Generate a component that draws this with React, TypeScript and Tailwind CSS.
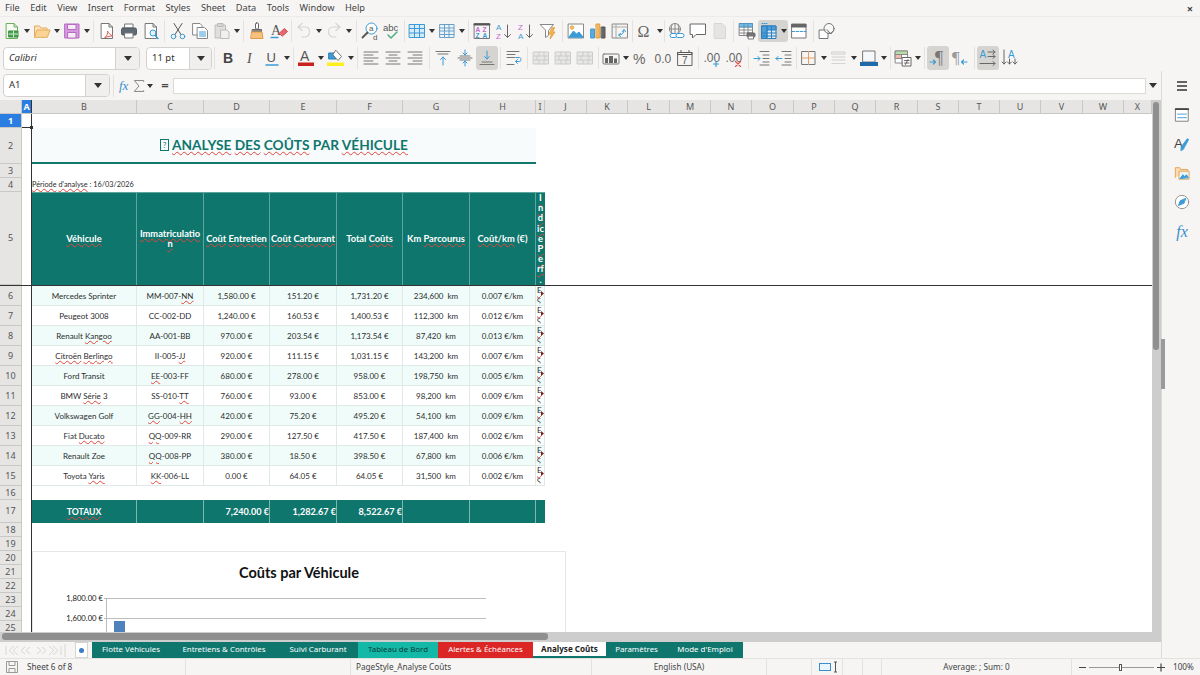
import React from "react";

const Svg = ({ children, s = 18 }: { children: React.ReactNode; s?: number }) => (
  <svg width={s} height={s} viewBox="0 0 18 18" fill="none" stroke="#5a5a5a" strokeWidth="1" strokeLinejoin="round" strokeLinecap="round">
    {children}
  </svg>
);
const B = "#3b9bd6";
const T = ({ x, y, c, s = 8, w = 400, f = "Liberation Sans", st = "normal", children }: any) => (
  <text x={x} y={y} fill={c} stroke="none" fontSize={s} fontWeight={w} fontFamily={f} fontStyle={st}>{children}</text>
);
const Doc = ({ c = "#777" }: { c?: string }) => <path d="M3.500 1.500h7.500l3.500 3.500v11.500h-11z M11 1.500v3.500h3.500" stroke={c} fill="#fff" />;
const GridIc = ({ fill = "#d6ebf8", stroke = B }: { fill?: string; stroke?: string }) => (
  <g stroke={stroke}>
    <rect x="1.500" y="2.500" width="15" height="13" fill={fill} />
    <path d="M1.500 6.500h15M1.500 11h15M6.500 2.500v13M11.500 2.500v13" />
  </g>
);
const Lines = ({ ys, x1s, x2s }: { ys: number[]; x1s: number[]; x2s: number[] }) => (
  <g stroke="#777">{ys.map((y, i) => <path key={i} d={`M${x1s[i]} ${y}H${x2s[i]}`} />)}</g>
);

const ic: Record<string, React.ReactNode> = {
  newDoc: <Svg><path d="M3.500 1.500h7.500l3.500 3.500v11.500h-11z M11 1.500v3.500h3.500" stroke="#6ab05c" fill="#f6fbf3" /><rect x="6" y="9" width="9" height="6" fill="#4aa350" stroke="#3a8a40" /><path d="M6 12h9M10.500 9v6" stroke="#cfe9cf" /></Svg>,
  open: <Svg><path d="M1.500 15V4h5l1.500 2h6v2" stroke="#e3ab5e" fill="#fbe2b8" /><path d="M1.500 15l2.500-7h13l-2.500 7z" stroke="#e3ab5e" fill="#fbd394" /></Svg>,
  save: <Svg><path d="M2 2h14v14H2z" fill="#d59ade" stroke="#b56cc0" /><rect x="5" y="2.500" width="8" height="5" fill="#f8eefa" stroke="#b56cc0" /><rect x="5" y="10.500" width="8" height="5.500" fill="#f8eefa" stroke="#b56cc0" /></Svg>,
  pdf: <Svg><Doc /><path d="M7 15.500c2.500-2 3-5 2.500-6.500 1 2 2.500 4 5.500 5-2.500 0-5 .5-8 1.500z" stroke="#dd6058" /></Svg>,
  print: <Svg><rect x="5" y="2" width="8" height="4" fill="#fff" stroke="#777" /><rect x="1.500" y="6" width="15" height="7" rx="1.500" fill="#5f6a74" stroke="#505a63" /><rect x="5" y="11" width="8" height="5" fill="#fff" stroke="#777" /></Svg>,
  preview: <Svg><Doc /><circle cx="11" cy="11" r="3" stroke={B} fill="#e4f2fb" /><path d="M13 13.500l3 3" stroke={B} strokeWidth="1.500" /></Svg>,
  cut: <Svg><path d="M5 1.500l7 11M13 1.500l-7 11" stroke="#555" /><circle cx="4.500" cy="14.500" r="2.300" stroke={B} /><circle cx="13.500" cy="14.500" r="2.300" stroke={B} /></Svg>,
  copy: <Svg><path d="M2 1.500h7l2 2v9.500h-9z" stroke="#888" fill="#fff" /><path d="M6.500 5.500h7l3 3v8h-10z" stroke="#888" fill="#fff" /><path d="M8.500 10h6M8.500 12h6M8.500 14h6" stroke={B} /></Svg>,
  paste: <Svg><rect x="2.500" y="3" width="10" height="13" fill="#e0dfdd" stroke="#bbb" /><rect x="5" y="1.500" width="5" height="3" fill="#d5d5d3" stroke="#bbb" /><path d="M8 8h6l2 2v6.500H8z" fill="#f0f0ee" stroke="#bbb" /></Svg>,
  clone: <Svg><rect x="7.500" y="1" width="3" height="6" rx="1" stroke="#666" fill="#fff" /><path d="M4.500 7.500h9v2.500h-9z" fill="#888" stroke="#666" /><path d="M4 10h10l1 6.500H3z" fill="#f8c27e" stroke="#e09a45" /></Svg>,
  clear: <Svg><T x="1" y="13" c="#555" s={14} f="Liberation Serif">A</T><path d="M1 15.500h7" stroke={B} strokeWidth="1.300" /><path d="M9.500 11l5-4.500 3 3-5 4.500z" fill="#e9666a" stroke="#d44d52" /></Svg>,
  undo: <Svg><path d="M3 5l4-3.500M3 5l4 3.500M3 5h7c6 0 6 9 0 10H7" stroke="#d6d5d3" strokeWidth="1.200" /></Svg>,
  redo: <Svg><path d="M15 5l-4-3.500M15 5l-4 3.500M15 5H8c-6 0-6 9 0 10h3" stroke="#d6d5d3" strokeWidth="1.200" /></Svg>,
  find: <Svg><circle cx="10.500" cy="6.500" r="5.500" stroke={B} fill="#fff" /><T x="8" y="9" c="#555" s={8}>a</T><path d="M6.500 10.500L1.500 15.500" stroke="#555" strokeWidth="1.800" /><T x="12" y="17.500" c="#555" s={8}>d</T></Svg>,
  spell: <Svg><T x="0" y="9" c="#555" s={9.500}>abc</T><path d="M5 13l3 3 6-6" stroke="#4caf7d" strokeWidth="1.500" /></Svg>,
  grid: <Svg><GridIc /></Svg>,
  grid2: <Svg><g stroke="#6a9fc6"><rect x="2" y="2.500" width="14" height="13" fill="#eef5fa" /><path d="M2 6h14M2 9h14M2 12.500h14M6.500 2.500v13M11 2.500v13" /></g></Svg>,
  sort: <Svg><rect x="1.500" y="1.500" width="15" height="15" stroke="#777" /><path d="M1.500 2.500h15" stroke="#555" strokeWidth="2" /><T x="2.500" y="9.500" c="#c46ad0" s={6.500} w={700}>A</T><T x="9.500" y="9.500" c="#c46ad0" s={6.500} w={700}>Z</T><T x="2.500" y="15.500" c={B} s={6.500} w={700}>Z</T><T x="9.500" y="15.500" c={B} s={6.500} w={700}>A</T></Svg>,
  asc: <Svg><T x="1" y="8" c={B} s={8}>A</T><T x="1" y="16.500" c="#c46ad0" s={8}>Z</T><path d="M12.500 3v12M9.500 12.500l3 3 3-3" stroke="#666" /></Svg>,
  desc: <Svg><T x="1" y="8" c="#c46ad0" s={8}>Z</T><T x="1" y="16.500" c={B} s={8}>A</T><path d="M12.500 3v12M9.500 12.500l3 3 3-3" stroke="#666" /></Svg>,
  filter: <Svg><path d="M1.500 2.500h13l-5 6v5l-3 2v-7z" stroke="#888" fill="#fff" /><path d="M13 6l-3 6h2.500l-1.500 5 5-7h-2.500l2-4z" fill="#f3b45a" stroke="#e8a040" /></Svg>,
  image: <Svg><rect x="1.500" y="2" width="15" height="14" stroke="#888" fill="#fff" /><path d="M2 15l4.500-6 3 3 2.500-2 4 5z" fill={B} stroke={B} /><circle cx="5" cy="5.500" r="1.700" fill="#f5c069" stroke="#e8a94a" /></Svg>,
  chart: <Svg><rect x="2" y="7" width="3.500" height="9" fill="#5aaade" stroke={B} /><rect x="7.300" y="2" width="3.500" height="14" fill="#f3b45a" stroke="#e3a040" /><rect x="12.500" y="5" width="3.500" height="11" fill="#666" stroke="#555" /></Svg>,
  pivot: <Svg><rect x="1.500" y="2" width="15" height="14" stroke="#888" fill="#f4f4f3" /><path d="M1.500 5h15M5 2v14" stroke="#aaa" /><path d="M8 13c3 0 5-2 5-5M11.500 9.500L13 7.500l1.500 2M9.500 11.500L7.500 13l2 1.500" stroke={B} /></Svg>,
  omega: <Svg><T x="1.500" y="15" c="#666" s={16} f="Liberation Serif">Ω</T></Svg>,
  link: <Svg><circle cx="8" cy="7" r="5.500" stroke="#888" /><path d="M2.500 7h11M8 1.500v11M5 2.500c-1 3-1 6 0 9M11 2.500c1 3 1 6 0 9" stroke="#888" /><rect x="3" y="11.500" width="7" height="4" rx="2" stroke={B} fill="#fff" /><rect x="9" y="11.500" width="8" height="4" rx="2" stroke={B} fill="#fff" /></Svg>,
  comment: <Svg><path d="M1.500 2h15v10.500H7l-3.500 3.500v-3.500h-2z" stroke="#666" fill="#fff" /></Svg>,
  headers: <Svg><path d="M3.500 1.500h7.500l3.500 3.500v11.500h-11z" fill="#e4e4e2" stroke="#d6d6d4" /></Svg>,
  printArea: <Svg><g stroke="#888"><rect x="1.500" y="1.500" width="13" height="12" fill="#fff" /><path d="M1.500 5h13M1.500 8h13M1.500 11h13M6 1.500v12M10 1.500v12" /></g><path d="M1.500 1.500h13v3.500h-13z" fill={B} stroke={B} opacity=".7" /><rect x="9" y="11" width="8" height="4" rx="1" fill="#777" stroke="#666" /><rect x="10.500" y="14" width="5" height="3" fill="#fff" stroke="#777" /></Svg>,
  freeze: <Svg><g stroke="#2f7fbc"><rect x="2" y="4" width="14" height="12.500" fill="#d8ebf8" /><rect x="2" y="4" width="14" height="4" fill="#4a9fd8" /><rect x="2" y="4" width="5" height="12.500" fill="#4a9fd8" /><path d="M2 11h14M2 14h14M7 4v12.500M11.500 4v12.500" /></g><path d="M2 1.500h6" stroke={B} strokeDasharray="1 1" /></Svg>,
  split: <Svg><rect x="2" y="2" width="14" height="14" stroke="#777" fill="#fff" /><path d="M2 2.500h14v2.500H2z" fill="#666" stroke="#666" /><path d="M2 9.500h14" stroke={B} strokeDasharray="2.500 1.500" /></Svg>,
  shapes: <Svg><path d="M1.500 8h8.500v8.500H1.500z" stroke="#777" fill="#fff" /><circle cx="11" cy="6.500" r="5" stroke="#777" fill="#fff" fillOpacity=".4" /><path d="M10 9l3 3 3-4" stroke="#777" /></Svg>,
  bold: <Svg><T x="4" y="14" c="#444" s={14} w={700}>B</T></Svg>,
  italic: <Svg><T x="6" y="14" c="#555" s={14} f="Liberation Serif" st="italic">I</T></Svg>,
  under: <Svg><T x="3.500" y="13" c="#555" s={13}>U</T><path d="M3 16h12" stroke={B} strokeWidth="1.500" /></Svg>,
  fontColor: <Svg><T x="3" y="12" c="#555" s={14}>A</T><rect x="1" y="13.500" width="16" height="3.500" fill="#c9211e" stroke="none" /></Svg>,
  hilite: <Svg><path d="M2 4h7v6H2z" fill={B} stroke="#2f7fb5" /><path d="M9 1.500l5.500 6-3.500 4-5-5.500z" fill="#fff" stroke="#777" /><rect x="0" y="13.500" width="17" height="3.500" fill="#ffee22" stroke="none" /></Svg>,
  left: <Svg><Lines ys={[3, 6, 9, 12, 15]} x1s={[2, 2, 2, 2, 2]} x2s={[16, 11, 16, 11, 16]} /></Svg>,
  center: <Svg><Lines ys={[3, 6, 9, 12, 15]} x1s={[2, 5, 2, 5, 2]} x2s={[16, 13, 16, 13, 16]} /></Svg>,
  right: <Svg><Lines ys={[3, 6, 9, 12, 15]} x1s={[2, 7, 2, 7, 2]} x2s={[16, 16, 16, 16, 16]} /></Svg>,
  top: <Svg><Lines ys={[2.500, 5]} x1s={[2, 4]} x2s={[16, 14]} /><path d="M9 16V8M6.500 10.500L9 8l2.500 2.500" stroke={B} /></Svg>,
  middle: <Svg><path d="M2 9h14M4 7h10M4 11h10" stroke="#777" /><path d="M9 1v5M7 4l2 2 2-2M9 17v-5M7 14l2-2 2 2" stroke={B} /></Svg>,
  bottom: <Svg><path d="M2 15.500h14M4 13h10" stroke="#777" /><path d="M9 2v8M6.500 7.500L9 10l2.500-2.500" stroke={B} /></Svg>,
  wrap: <Svg><Lines ys={[2.500, 5.500, 8.500, 15.500]} x1s={[2, 2, 2, 2]} x2s={[14, 10, 10, 9]} /><path d="M11 8.500h3.500c2 0 2 4 0 4H11M12.500 10.500L10.500 12.500l2 2" stroke={B} /></Svg>,
  merge: <Svg><g stroke="#cbcbc9"><rect x="1.500" y="3" width="15" height="12" fill="#e8e8e6" /><path d="M1.500 7h15M1.500 11h15M7 3v4M12 3v4M5 7v4M13 7v4M7 11v4M12 11v4" /></g></Svg>,
  currency: <Svg><rect x="1" y="5" width="16" height="10" rx="1" stroke="#777" /><rect x="3" y="9" width="3" height="5" fill="#666" stroke="none" /><rect x="7" y="7" width="4" height="7" fill="#666" stroke="none" /><rect x="12" y="9.500" width="3" height="4.500" fill="#666" stroke="none" /></Svg>,
  percent: <Svg><T x="1" y="15" c="#666" s={14}>%</T></Svg>,
  number: <Svg><T x="0.500" y="14" c="#666" s={12}>0.0</T></Svg>,
  date: <Svg><rect x="2" y="3.500" width="14" height="13" stroke="#666" /><path d="M2 3.500h14v2H2zM5 1.500v2M13 1.500v2" stroke="#555" /><T x="6" y="15" c="#555" s={10}>7</T></Svg>,
  addDec: <Svg><T x="0.500" y="13" c="#666" s={12}>.00</T><path d="M13 12.500v5M10.500 15h5" stroke={B} strokeWidth="1.200" /></Svg>,
  delDec: <Svg><T x="0.500" y="13" c="#666" s={12}>.00</T><path d="M10.500 12.500l5 5M15.500 12.500l-5 5" stroke="#e0504a" strokeWidth="1.200" /></Svg>,
  inc: <Svg><path d="M7 2.500h9M10 6h6M10 9.500h6M10 13h6M7 16h9" stroke="#777" /><path d="M1 9.500h6M5 7.500l2 2-2 2" stroke={B} /></Svg>,
  dec: <Svg><path d="M7 2.500h9M10 6h6M10 9.500h6M10 13h6M7 16h9" stroke="#777" /><path d="M7 9.500H1M3 7.500l-2 2 2 2" stroke={B} /></Svg>,
  borders: <Svg><rect x="2" y="2.500" width="13" height="13" stroke="#777" /><path d="M8.500 2.500v13M2 9h13" stroke="#e8a060" /></Svg>,
  bstyle: <Svg><path d="M2 3h13v2H2zM2 8h13M2 11h13" stroke="#cfcfcd" /><path d="M2 14.500h13" stroke="#cfcfcd" strokeDasharray="2 1" /></Svg>,
  bcolor: <Svg><rect x="3" y="2" width="12" height="11" stroke="#777" fill="#f4f8fb" /><rect x="0" y="13" width="18" height="4" fill="#1f6aa8" stroke="none" /></Svg>,
  cond: <Svg><rect x="1.500" y="2" width="12" height="12" stroke="#888" fill="#fff" /><path d="M1.500 2h12v3.500h-12z" fill="#b8dcaa" stroke="#888" /><path d="M1.500 5.500h6v4h-6z" fill="#f3b8b0" stroke="#888" /><rect x="8.500" y="8.500" width="8.500" height="8.500" fill="#fff" stroke="#666" /><path d="M10.500 11.500h4.500M10.500 14h4.500M14 10.500l-2.500 5" stroke="#666" /></Svg>,
  ltr: <Svg><T x="6" y="15" c="#777" s={18} f="Liberation Serif">¶</T><path d="M1 13h5.500M4.500 11l2 2-2 2" stroke={B} strokeWidth="1.200" /></Svg>,
  rtl: <Svg><T x="1" y="14" c="#999" s={17} f="Liberation Serif">¶</T><path d="M16 13h-5M12.500 11l-2 2 2 2" stroke={B} strokeWidth="1.200" /></Svg>,
  textH: <Svg><T x="0.500" y="9" c={B} s={10}>A</T><path d="M9 3h7M14 1l2 2-2 2M9 7.500h7M14 5.500l2 2-2 2M1 14.500h15M14 12.500l2 2-2 2" stroke="#666" /></Svg>,
  textV: <Svg><T x="7" y="9" c={B} s={10}>A</T><path d="M3 1v14M1 13l2 2 2-2M8.500 10v5M6.500 13l2 2 2-2M14 10v5M12 13l2 2 2-2" stroke="#666" /></Svg>,
};

const Dd = () => (
  <div className="w-[8px] h-[22px] flex items-center justify-center shrink-0">
    <svg width="6" height="4"><path d="M0 0h6L3 4z" fill="#333" /></svg>
  </div>
);
const Btn = ({ n }: { n: string }) => (
  <div className="w-[22px] h-[22px] flex items-center justify-center shrink-0">{ic[n]}</div>
);
const ABtn = ({ n }: { n: string }) => (
  <div className="w-[22px] h-[24px] flex items-center justify-center shrink-0 rounded-[3px] bg-[#d6d4d0]">{ic[n]}</div>
);
const Sep = ({ w }: { w: string }) => (
  <div className={`${w} h-[22px] flex justify-center shrink-0`}>
    <div className="w-px h-full bg-[#e3e2df]" />
  </div>
);
const Caret = () => <svg width="8" height="5"><path d="M0 0h8L4 5z" fill="#333" /></svg>;

const Combo = ({ v, w, dd, it }: { v: string; w: string; dd: string; it?: boolean }) => (
  <div className={`${w} h-[23px] flex rounded-[4px] border border-[#d4d2cf] bg-white overflow-hidden shrink-0`}>
    <div className={`flex-1 flex items-center pl-[5px] text-[9.500px] text-[#333] ${it ? "italic" : ""}`}>{v}</div>
    <div className={`${dd} flex items-center justify-center bg-[#f0efed] border-l border-[#d4d2cf]`}><Caret /></div>
  </div>
);

const Wv = ({ children }: { children: React.ReactNode }) => (
  <span className="underline decoration-wavy decoration-[#e2453c] decoration-[0.700px] underline-offset-[1px]">{children}</span>
);

const COLS = [
  ["B", "w-[105px]"], ["C", "w-[67px]"], ["D", "w-[66px]"], ["E", "w-[67px]"], ["F", "w-[66px]"], ["G", "w-[67px]"], ["H", "w-[66px]"], ["I", "w-[9px]"],
  ["J", "w-[42px]"], ["K", "w-[41px]"], ["L", "w-[42px]"], ["M", "w-[41px]"], ["N", "w-[41px]"], ["O", "w-[42px]"], ["P", "w-[41px]"], ["Q", "w-[41px]"], ["R", "w-[42px]"], ["S", "w-[41px]"], ["T", "w-[41px]"], ["U", "w-[41px]"], ["V", "w-[42px]"], ["W", "w-[41px]"], ["X", "w-[28px]"],
];
const W = ["w-[105px]", "w-[67px]", "w-[66px]", "w-[67px]", "w-[66px]", "w-[67px]", "w-[66px]"];

const DATA: React.ReactNode[][] = [
  ["Mercedes Sprinter", <>MM-007-<Wv>NN</Wv></>, "1,580.00 €", "151.20 €", "1,731.20 €", "234,600\u00a0\u00a0km", "0.007 €/km"],
  ["Peugeot 3008", "CC-002-DD", "1,240.00 €", "160.53 €", "1,400.53 €", "112,300\u00a0\u00a0km", "0.012 €/km"],
  [<>Renault <Wv>Kangoo</Wv></>, "AA-001-BB", "970.00 €", "203.54 €", "1,173.54 €", "87,420\u00a0\u00a0km", "0.013 €/km"],
  [<><Wv>Citroën</Wv> <Wv>Berlingo</Wv></>, <>II-005-<Wv>JJ</Wv></>, "920.00 €", "111.15 €", "1,031.15 €", "143,200\u00a0\u00a0km", "0.007 €/km"],
  ["Ford Transit", <><Wv>EE</Wv>-003-FF</>, "680.00 €", "278.00 €", "958.00 €", "198,750\u00a0\u00a0km", "0.005 €/km"],
  [<>BMW <Wv>Série</Wv> 3</>, <>SS-010-<Wv>TT</Wv></>, "760.00 €", "93.00 €", "853.00 €", "98,200\u00a0\u00a0km", "0.009 €/km"],
  ["Volkswagen Golf", <><Wv>GG</Wv>-004-<Wv>HH</Wv></>, "420.00 €", "75.20 €", "495.20 €", "54,100\u00a0\u00a0km", "0.009 €/km"],
  [<>Fiat <Wv>Ducato</Wv></>, <><Wv>QQ</Wv>-009-RR</>, "290.00 €", "127.50 €", "417.50 €", "187,400\u00a0\u00a0km", "0.002 €/km"],
  ["Renault Zoe", <><Wv>QQ</Wv>-008-PP</>, "380.00 €", "18.50 €", "398.50 €", "67,800\u00a0\u00a0km", "0.006 €/km"],
  [<>Toyota <Wv>Yaris</Wv></>, <><Wv>KK</Wv>-006-LL</>, "0.00 €", "64.05 €", "64.05 €", "31,500\u00a0\u00a0km", "0.002 €/km"],
];

const RowH = ({ n, h, sel }: { n: number; h: string; sel?: boolean }) => (
  <div className={`w-[22px] ${h} shrink-0 flex items-center justify-center text-[9px] border-b border-r border-[#c9c8c5] font-['Noto_Sans',sans-serif] ${sel ? "bg-[#2a7de1] text-white font-bold" : "bg-[#e6e5e3] text-[#555]"}`}>{n}</div>
);
const ACell = ({ h }: { h: string }) => <div className={`w-[10px] ${h} shrink-0 border-r border-[#333] bg-white`} />;

const Row = ({ n, h, children, className = "" }: { n: number; h: string; children?: React.ReactNode; className?: string }) => (
  <div className={`flex ${h} ${className}`}>
    <RowH n={n} h="h-full" />
    <ACell h="h-full" />
    <div className="flex-1 flex min-w-0">{children}</div>
  </div>
);

const HeadCell = ({ w, children }: { w: string; children?: React.ReactNode }) => (
  <div className={`${w} shrink-0 h-full flex items-center justify-center text-center bg-[#0f766e] text-white font-bold text-[9.300px] leading-[10.500px] border-r border-t border-[#5fa59f]`}>{children}</div>
);

const NavArrows = () => (
  <svg width="61" height="13" viewBox="0 0 61 13" fill="none" stroke="#d8d7d4">
    <path d="M1 2v9M9 2L4 6.500 9 11M13 2L8 6.500l5 4.500M20 3l-4 3.500 4 3.500M25 3l-4 3.500 4 3.500M32 3l4 3.500-4 3.500M37 3l4 3.500-4 3.500M44 2l5 4.500L44 11M48 2l5 4.500L48 11M56 2v9M60 0v13" />
  </svg>
);

export default function App() {
  return (
    <div className="w-[1200px] h-[675px] overflow-hidden flex flex-col bg-[#f6f5f4] font-['Noto_Sans',sans-serif] text-[#333]">
      {/* Menu */}
      <div className="h-[17px] shrink-0 flex items-center pl-[5px] gap-[10.500px] text-[9.200px] text-[#444] border-b border-[#ecebe9] relative">
        {["File", "Edit", "View", "Insert", "Format", "Styles", "Sheet", "Data", "Tools", "Window", "Help"].map((m) => <span key={m}>{m}</span>)}
        <span className="ml-auto mr-[7px] text-[11px] leading-none font-bold">×</span>
      </div>
      {/* Toolbar 1 */}
      <div className="h-[28px] shrink-0 flex items-center pl-[1px]">
        <Btn n="newDoc" /><Dd /><Btn n="open" /><Dd /><Btn n="save" /><Dd /><Sep w="w-[5px]" />
        <Btn n="pdf" /><Btn n="print" /><Btn n="preview" /><Sep w="w-[5px]" />
        <Btn n="cut" /><Btn n="copy" /><Btn n="paste" /><Dd /><Sep w="w-[5px]" />
        <Btn n="clone" /><Btn n="clear" /><Sep w="w-[3px]" />
        <Btn n="undo" /><Dd /><Btn n="redo" /><Dd /><Sep w="w-[6px]" />
        <Btn n="find" /><Btn n="spell" /><Sep w="w-[3px]" />
        <Btn n="grid" /><Dd /><Btn n="grid2" /><Dd /><Sep w="w-[5px]" />
        <Btn n="sort" /><Btn n="asc" /><Btn n="desc" /><Btn n="filter" /><Sep w="w-[6px]" />
        <Btn n="image" /><Btn n="chart" /><Btn n="pivot" /><Sep w="w-[3px]" />
        <Btn n="omega" /><Dd /><Sep w="w-[1px]" /><Btn n="link" /><Btn n="comment" /><Btn n="headers" /><Sep w="w-[5px]" />
        <Btn n="printArea" />
        <div className="flex rounded-[3px] bg-[#d6d4d0]"><Btn n="freeze" /><Dd /></div>
        <Btn n="split" /><Sep w="w-[6px]" /><Btn n="shapes" />
      </div>
      {/* Toolbar 2 */}
      <div className="h-[26px] shrink-0 flex items-center pl-[3px]">
        <Combo v="Calibri" w="w-[137px]" dd="w-[24px]" it />
        <div className="w-[6px]" />
        <Combo v="11 pt" w="w-[66px]" dd="w-[22px]" />
        <Sep w="w-[5px]" />
        <Btn n="bold" /><Btn n="italic" /><Btn n="under" /><Dd /><Sep w="w-[4px]" />
        <Btn n="fontColor" /><Dd /><Btn n="hilite" /><Dd /><Sep w="w-[5px]" />
        <Btn n="left" /><Btn n="center" /><Btn n="right" /><Sep w="w-[6px]" />
        <Btn n="top" /><Btn n="middle" /><ABtn n="bottom" /><Sep w="w-[5px]" />
        <Btn n="wrap" /><Sep w="w-[5px]" />
        <Btn n="merge" /><Btn n="merge" /><Btn n="merge" /><Sep w="w-[4px]" />
        <Btn n="currency" /><Dd /><Btn n="percent" /><Btn n="number" /><Btn n="date" /><Sep w="w-[5px]" />
        <Btn n="addDec" /><Btn n="delDec" /><Sep w="w-[6px]" />
        <Btn n="inc" /><Btn n="dec" /><Sep w="w-[3px]" />
        <Btn n="borders" /><Dd /><Btn n="bstyle" /><Dd /><Btn n="bcolor" /><Dd /><Sep w="w-[4px]" />
        <Btn n="cond" /><Dd /><Sep w="w-[5px]" />
        <ABtn n="ltr" /><Btn n="rtl" /><Sep w="w-[6px]" />
        <ABtn n="textH" /><Btn n="textV" />
      </div>
      {/* Middle */}
      <div className="flex-1 flex min-h-0">
        <div className="w-[1162px] shrink-0 flex flex-col border-r border-[#dcdbd8]">
          {/* Formula bar */}
          <div className="h-[29px] shrink-0 flex items-center pl-[3px]">
            <Combo v="A1" w="w-[107px]" dd="w-[24px]" />
            <Sep w="w-[7px]" />
            <span className="w-[13px] ml-[2px] text-[13px] italic text-[#3b8ecb] font-['Liberation_Serif',serif] leading-none">fx</span>
            <div className="w-[14px] flex justify-center"><Svg s={14}><path d="M15 3V2H3l6 7-6 7h12v-1" stroke="#666" /></Svg></div>
            <Dd />
            <span className="w-[14px] ml-[4px] text-center text-[13px] leading-none text-[#444] font-bold">=</span>
            <div className="w-[973px] ml-[1px] h-[16px] bg-white border border-[#dad9d6]" />
            <div className="ml-[2px] w-[10px] flex justify-center"><Caret /></div>
          </div>
          {/* Sheet */}
          <div className="flex-1 flex min-h-0">
            <div className="w-[1152px] shrink-0 flex flex-col bg-white">
              <div className="h-[14px] shrink-0 flex bg-[#e6e5e3] border-b border-[#c9c8c5] text-[9px] text-[#555]">
                <div className="w-[22px] border-r border-[#c9c8c5]" />
                <div className="w-[10px] bg-[#2a7de1] text-white font-bold flex items-center justify-center border-r border-[#333]">A</div>
                {COLS.map(([c, w]) => (
                  <div key={c} className={`${w} shrink-0 flex items-center justify-center border-r border-[#c9c8c5]`}>{c}</div>
                ))}
              </div>
              <div className="relative flex-1 min-h-0 overflow-hidden font-['Lato',sans-serif] text-[8px] text-[#2d2d2d]">
                {/* row 1 */}
                <div className="flex h-[14px]">
                  <RowH n={1} h="h-full" sel />
                  <div className="w-[10px] h-full border-b border-r border-[#333] relative">
                    <div className="absolute right-[-2px] bottom-[-2px] w-[3px] h-[3px] bg-[#333]" />
                  </div>
                </div>
                <Row n={2} h="h-[36px]">
                  <div className="w-[504px] h-full bg-[#f8fbfb] border-b-2 border-[#13766e] flex items-center justify-center text-[#0f766e] text-[13.700px] font-bold gap-[3px]">
                    <span className="w-[9px] h-[12px] border border-[#0f766e] text-[8px] leading-[10px] text-center font-normal">?</span>
                    <span><Wv>ANALYSE</Wv> <Wv>DES</Wv> <Wv>COÛTS</Wv> PAR <Wv>VÉHICULE</Wv></span>
                  </div>
                </Row>
                <Row n={3} h="h-[14px]" />
                <Row n={4} h="h-[14px]">
                  <div className="flex items-end pb-[1px] whitespace-nowrap text-[7.300px]"><span><Wv>Période</Wv> <Wv>d'analyse</Wv> : 16/03/2026</span></div>
                </Row>
                <div className="flex h-[94px] border-b border-[#333]">
                  <RowH n={5} h="h-full" />
                  <ACell h="h-full" />
                  <HeadCell w="w-[105px]"><Wv>Véhicule</Wv></HeadCell>
                  <HeadCell w="w-[67px]"><span><Wv>Immatriculatio</Wv><br /><Wv>n</Wv></span></HeadCell>
                  <HeadCell w="w-[66px]"><span className="whitespace-nowrap"><Wv>Coût</Wv> <Wv>Entretien</Wv></span></HeadCell>
                  <HeadCell w="w-[67px]"><span className="whitespace-nowrap"><Wv>Coût</Wv> <Wv>Carburant</Wv></span></HeadCell>
                  <HeadCell w="w-[66px]"><span>Total <Wv>Coûts</Wv></span></HeadCell>
                  <HeadCell w="w-[67px]"><span>Km <Wv>Parcourus</Wv></span></HeadCell>
                  <HeadCell w="w-[66px]"><span><Wv>Coût/km</Wv> (€)</span></HeadCell>
                  <div className="w-[9px] h-full shrink-0 bg-[#0f766e] text-white font-bold text-[9.300px] leading-[10.200px] text-center border-t border-[#5fa59f] overflow-hidden">
                    {["I", "n", "d", "ic", "e", "P", "e", "rf", "."].map((t, i) => <div key={i}><Wv>{t}</Wv></div>)}
                  </div>
                </div>
                {DATA.map((r, i) => (
                  <Row key={i} n={6 + i} h="h-[20px]">
                    {r.map((c, j) => (
                      <div key={j} className={`${W[j]} shrink-0 h-full flex items-center justify-center whitespace-nowrap border-r border-b border-[#dfe9e7] ${i % 2 === 0 ? "bg-[#effcf9]" : "bg-white"}`}>
                        <span>{c}</span>
                      </div>
                    ))}
                    <div className={`w-[9px] shrink-0 h-full relative overflow-hidden border-b border-r border-[#dfe9e7] text-[8px] leading-[9px] pl-[1px] ${i % 2 === 0 ? "bg-[#effcf9]" : "bg-white"}`}>
                      <div><Wv>E</Wv></div>
                      <div><Wv>ς</Wv></div>
                      <svg className="absolute right-0 top-[5px]" width="3" height="5"><path d="M0 0l3 2.500L0 5z" fill="#7a1f1a" /></svg>
                    </div>
                  </Row>
                ))}
                <Row n={16} h="h-[14px]" />
                <Row n={17} h="h-[23px]">
                  <div className="w-[105px] h-full shrink-0 bg-[#0f766e] text-white font-bold text-[8.700px] flex items-center justify-center border-r border-[#7db5af]"><Wv>TOTAUX</Wv></div>
                  <div className="w-[67px] h-full shrink-0 bg-[#0f766e] border-r border-[#7db5af]" />
                  {["7,240.00 €", "1,282.67 €", "8,522.67 €"].map((t, i) => (
                    <div key={t} className={`${i === 1 ? "w-[67px]" : "w-[66px]"} h-full shrink-0 bg-[#0f766e] text-white font-bold text-[9.100px] flex items-center justify-end border-r border-[#7db5af] whitespace-nowrap overflow-hidden`}>{t}</div>
                  ))}
                  <div className="w-[67px] h-full shrink-0 bg-[#0f766e] border-r border-[#7db5af]" />
                  <div className="w-[66px] h-full shrink-0 bg-[#0f766e] border-r border-[#7db5af]" />
                  <div className="w-[9px] h-full shrink-0 bg-[#0f766e]" />
                </Row>
                {[18, 19, 20, 21, 22, 23, 24, 25].map((n) => <Row key={n} n={n} h="h-[14px]" />)}
                {/* Chart */}
                <div className="absolute left-[32px] top-[437px] w-[534px] h-[120px] bg-white border border-[#e6e6e6]">
                  <div className="text-center text-[14.500px] font-bold text-[#111] mt-[12px] leading-[18px]">Coûts par Véhicule</div>
                  <div className="mt-[11px] flex flex-col gap-[9px]">
                    {["1,800.00 €", "1,600.00 €"].map((t) => (
                      <div key={t} className="flex items-center h-[11px]">
                        <span className="w-[70px] text-right text-[7.700px] text-[#222]">{t}</span>
                        <span className="w-[3px] h-px bg-[#bbb] ml-[1px]" />
                        <span className="w-[379px] h-px bg-[#bdbdbd]" />
                      </div>
                    ))}
                  </div>
                  <div className="absolute left-[73px] top-[47px] w-px h-[60px] bg-[#bdbdbd]" />
                  <div className="absolute left-[81px] top-[69px] w-[11px] h-[30px] bg-[#4f81bd]" />
                </div>
              </div>
            </div>
            {/* Vertical scroll */}
            <div className="w-[9px] shrink-0 bg-[#cdcdcd] pt-[2px] pl-[1px] relative">
              <div className="w-[6px] h-[248px] rounded-[3px] bg-[#8f8f8f]" />
              <div className="absolute left-[9px] top-[239px] w-[4px] h-[50px] bg-[#9a9a9a] z-10" />
            </div>
          </div>
          {/* Horizontal scroll */}
          <div className="h-[10px] shrink-0 bg-[#cdcdcd] pt-[1px] pl-[2px] pr-[10px]">
            <div className="w-[546px] h-[7px] rounded-[3px] bg-[#8f8f8f]" />
          </div>
          {/* Tabs */}
          <div className="h-[16px] shrink-0 flex items-stretch text-[7.900px] text-white">
            <div className="w-[75px] shrink-0 pl-[5px] flex items-center"><NavArrows /></div>
            <div className="w-[13px] shrink-0 bg-white border border-[#d6d5d2] flex items-center justify-center mr-[4px]">
              <span className="w-[5px] h-[5px] rounded-full bg-[#3b7cc4]" />
            </div>
            <div className="w-[78px] bg-[#0f766e] flex items-center justify-center">Flotte Véhicules</div>
            <div className="w-[108px] bg-[#0f766e] flex items-center justify-center">Entretiens &amp; Contrôles</div>
            <div className="w-[80px] bg-[#0f766e] flex items-center justify-center">Suivi Carburant</div>
            <div className="w-[80px] bg-[#14b8a6] text-[#0b3b36] flex items-center justify-center">Tableau de Bord</div>
            <div className="w-[95px] bg-[#dc2626] flex items-center justify-center">Alertes &amp; Échéances</div>
            <div className="w-[73px] bg-white text-[#222] font-bold text-[8.100px] flex items-center justify-center border-b-2 border-[#0f766e]">Analyse Coûts</div>
            <div className="w-[61px] bg-[#0f766e] flex items-center justify-center">Paramètres</div>
            <div className="w-[76px] bg-[#0f766e] flex items-center justify-center">Mode d'Emploi</div>
          </div>
        </div>
        {/* Sidebar */}
        <div className="flex-1 flex flex-col items-center pl-[2px] pt-0">
          <div className="h-[29px] flex items-center justify-center">
            <svg width="14" height="12"><path d="M2 2h10M2 6h10M2 10h10" stroke="#333" strokeWidth="1.300" /></svg>
          </div>
          <div className="h-[29.500px] flex items-center justify-center"><Svg s={16}><rect x="2" y="2" width="14" height="14" stroke="#777" fill="#fff" /><path d="M2 2.500h14" stroke="#444" strokeWidth="2" /><path d="M4 8h10M4 12h10" stroke={B} /></Svg></div>
          <div className="h-[29px] flex items-center justify-center"><Svg s={16}><T x="0" y="13" c="#444" s={15}>A</T><path d="M8 16c2 0 3-1 3.500-3l5-9-1.500-1-6 8c-1.500 1-1 3-1 5z" fill={B} stroke={B} /></Svg></div>
          <div className="h-[29px] flex items-center justify-center"><Svg s={16}><path d="M1.500 14V3h5l1 2h8v2" stroke="#e0a050" fill="#fbdcae" /><rect x="6" y="7" width="11" height="9" fill="#e8f3fa" stroke="#e0a050" /><path d="M7 15l3-4 2 2 2-2 2 3z" fill={B} stroke={B} /></Svg></div>
          <div className="h-[29px] flex items-center justify-center"><Svg s={16}><circle cx="9" cy="9" r="7.500" stroke="#888" fill="#fff" /><path d="M13 5l-6 2.500L5 13l6-2.500z" fill={B} stroke={B} /></Svg></div>
          <div className="h-[30px] flex items-center justify-center text-[16px] italic text-[#3b8ecb] font-['Liberation_Serif',serif] leading-none">fx</div>
        </div>
      </div>
      {/* Status */}
      <div className="h-[17px] shrink-0 flex items-center text-[8.200px] text-[#444] border-t border-[#e3e2df]">
        <div className="w-[185px] h-full flex items-center gap-[9px] pl-[6px]">
          <svg width="12" height="12" viewBox="0 0 12 12" fill="none" stroke="#999"><path d="M.5.5h11v11H.5zM3 .5v4h6v-4M3 11.500v-4h6v4" /></svg>
          <span>Sheet 6 of 8</span>
        </div>
        <div className="w-[165px] h-full border-l border-[#e3e2df]" />
        <div className="w-[241px] h-full border-l border-[#e3e2df] flex items-center pl-[5px]">PageStyle_Analyse Coûts</div>
        <div className="w-[175px] h-full border-l border-[#e3e2df] flex items-center justify-center">English (USA)</div>
        <div className="w-[45px] h-full border-l border-[#e3e2df]" />
        <div className="w-[31px] h-full border-l border-[#e3e2df] flex items-center pl-[7px]">
          <svg width="20" height="12" fill="none"><rect x=".5" y="2.500" width="11" height="7" stroke="#3b8ecb" fill="#eaf4fb" /><path d="M15 1h3M16.500 1v10M15 11h3" stroke="#555" /></svg>
        </div>
        <div className="w-[20px] h-full border-l border-[#e3e2df]" />
        <div className="w-[19px] h-full border-l border-[#e3e2df]" />
        <div className="w-[190px] h-full border-l border-[#e3e2df] flex items-center justify-center">Average: ; Sum: 0</div>
        <div className="w-[99px] h-full border-l border-[#e3e2df] flex items-center pl-[6px]">
          <svg width="92" height="11" fill="none" stroke="#444"><path d="M1 5.500h7M79 5.500h8M83 1.500v8" strokeWidth="1.200" /><path d="M11 5.500h65" stroke="#999" /><rect x="41.500" y="2.500" width="2" height="6" fill="#fff" stroke="#555" /></svg>
        </div>
        <div className="w-[30px] h-full flex items-center pl-[3px]">100%</div>
      </div>
    </div>
  );
}
